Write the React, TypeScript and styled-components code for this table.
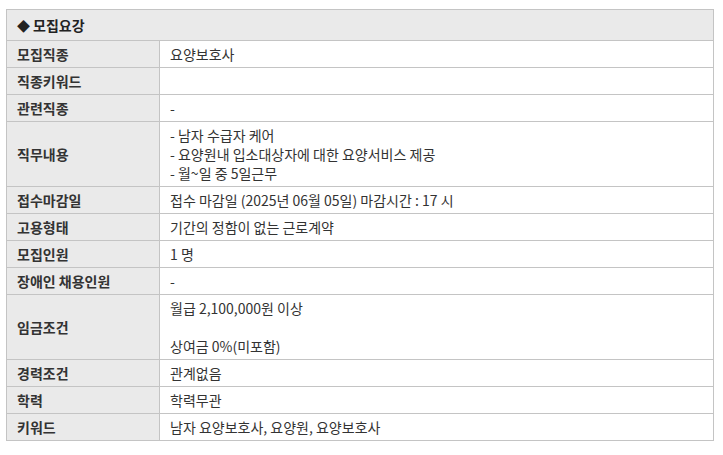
import { createGlobalStyle } from "styled-components";
import styled from "styled-components";

const GlobalStyle = createGlobalStyle`
  body {
    margin: 0;
    background: #fff;
    font-family: "Noto Sans CJK KR", "Noto Sans", sans-serif;
  }
`;

const Wrapper = styled.div`
  padding: 9px 0 0 6px;
`;

const Table = styled.table`
  width: 708px;
  border-collapse: collapse;
  table-layout: fixed;
  font-size: 14px;
  color: #333;
`;

const LabelCol = styled.col`
  width: 153px;
`;

const Caption = styled.th`
  height: 30px;
  padding: 0 10px;
  text-align: left;
  font-weight: bold;
  font-size: 14px;
  color: #222;
  background: #eaeaea;
  border: 1px solid #c4c4c4;
`;

const Diamond = styled.span`
  margin-right: 3px;
  font-size: 13px;
`;

const Label = styled.th`
  padding: 4px 10px 3px 10px;
  line-height: 19px;
  text-align: left;
  font-weight: bold;
  color: #333;
  background: #eaeaea;
  border: 1px solid #c4c4c4;
`;

const Value = styled.td`
  padding: 4px 10px 3px 10px;
  line-height: 19px;
  height: 19px;
  vertical-align: middle;
  background: #fff;
  border: 1px solid #c4c4c4;
  white-space: pre-line;
`;

const rows: [string, string][] = [
  ["모집직종", "요양보호사"],
  ["직종키워드", ""],
  ["관련직종", "-"],
  [
    "직무내용",
    "- 남자 수급자 케어\n- 요양원내 입소대상자에 대한 요양서비스 제공\n- 월~일 중 5일근무",
  ],
  ["접수마감일", "접수 마감일 (2025년 06월 05일) 마감시간 : 17 시"],
  ["고용형태", "기간의 정함이 없는 근로계약"],
  ["모집인원", "1 명"],
  ["장애인 채용인원", "-"],
  ["임금조건", "월급 2,100,000원 이상\n\n상여금 0%(미포함)"],
  ["경력조건", "관계없음"],
  ["학력", "학력무관"],
  ["키워드", "남자 요양보호사, 요양원, 요양보호사"],
];

function App() {
  return (
    <>
      <GlobalStyle />
      <Wrapper>
        <Table>
          <colgroup>
            <LabelCol />
            <col />
          </colgroup>
          <thead>
            <tr>
              <Caption colSpan={2}>
                <Diamond>◆</Diamond>모집요강
              </Caption>
            </tr>
          </thead>
          <tbody>
            {rows.map(([label, value]) => (
              <tr key={label}>
                <Label>{label}</Label>
                <Value>{value}</Value>
              </tr>
            ))}
          </tbody>
        </Table>
      </Wrapper>
    </>
  );
}

export default App;
